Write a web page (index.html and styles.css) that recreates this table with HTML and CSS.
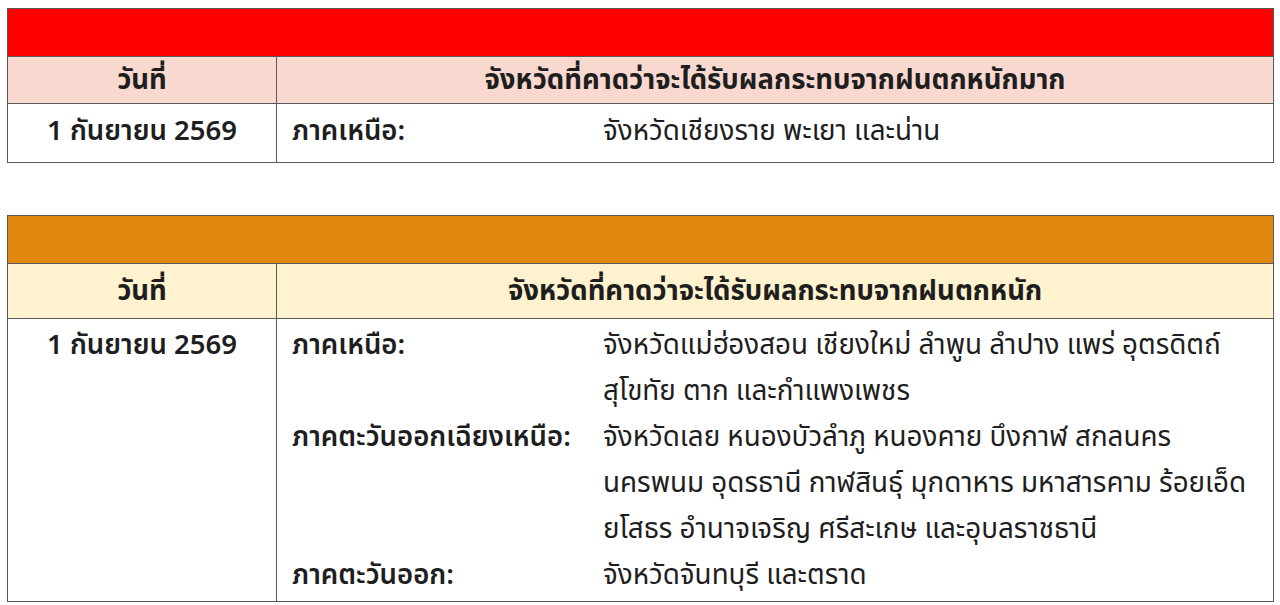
FILE: index.html
```html
<!DOCTYPE html>
<html lang="th">
<head>
<meta charset="utf-8">
<link rel="stylesheet" href="styles.css">
</head>
<body>
<div class="page">
  <section class="tbl tbl-red">
    <div class="bar"></div>
    <div class="row head">
      <div class="c1">วันที่</div>
      <div class="c2">จังหวัดที่คาดว่าจะได้รับผลกระทบจากฝนตกหนักมาก</div>
    </div>
    <div class="row body one">
      <div class="c1">1 กันยายน 2569</div>
      <div class="c2 regions">
        <div class="lbl">ภาคเหนือ:</div>
        <div class="val">จังหวัดเชียงราย พะเยา และน่าน</div>
      </div>
    </div>
  </section>

  <section class="tbl tbl-orange">
    <div class="bar"></div>
    <div class="row head">
      <div class="c1">วันที่</div>
      <div class="c2">จังหวัดที่คาดว่าจะได้รับผลกระทบจากฝนตกหนัก</div>
    </div>
    <div class="row body two">
      <div class="c1">1 กันยายน 2569</div>
      <div class="c2 regions">
        <div class="lbl">ภาคเหนือ:</div>
        <div class="val">จังหวัดแม่ฮ่องสอน เชียงใหม่ ลำพูน ลำปาง แพร่ อุตรดิตถ์<br>สุโขทัย ตาก และกำแพงเพชร</div>
        <div class="lbl">ภาคตะวันออกเฉียงเหนือ:</div>
        <div class="val">จังหวัดเลย หนองบัวลำภู หนองคาย บึงกาฬ สกลนคร<br>นครพนม อุดรธานี กาฬสินธุ์ มุกดาหาร มหาสารคาม ร้อยเอ็ด<br>ยโสธร อำนาจเจริญ ศรีสะเกษ และอุบลราชธานี</div>
        <div class="lbl">ภาคตะวันออก:</div>
        <div class="val">จังหวัดจันทบุรี และตราด</div>
      </div>
    </div>
  </section>
</div>
</body>
</html>
```
FILE: styles.css
```css
html, body {
  margin: 0;
  padding: 0;
  background: #ffffff;
}
body {
  font-family: "Noto Sans Thai", "Noto Sans", "DejaVu Sans", sans-serif;
  color: #1e1e1e;
  font-size: 27.5px;
}
.page {
  padding: 8px 6px 0 7px;
  display: flex;
  flex-direction: column;
  gap: 52px;
}
.tbl {
  border: 1.5px solid #5a5a5a;
  display: flex;
  flex-direction: column;
}
.bar {
  height: 47px;
  border-bottom: 1.5px solid #5a5a5a;
}
.tbl-red .bar { background: #fe0000; }
.tbl-orange .bar { background: #e0880f; }
.row {
  display: grid;
  grid-template-columns: 269px 1fr;
}
.row .c1 {
  border-right: 1.5px solid #5a5a5a;
  text-align: center;
}
.head {
  border-bottom: 1.5px solid #5a5a5a;
  font-weight: 700;
}
.tbl-red .head { background: #f9d8d0; height: 46px; line-height: 48px; }
.tbl-orange .head { background: #fff2cf; height: 54px; line-height: 56px; }
.head .c2 { text-align: center; }
.body { line-height: 46px; }
.body .c1 { font-weight: 600; }
.lbl { font-weight: 600; white-space: nowrap; }
.val { white-space: nowrap; font-size: 27.8px; }
.body.one { height: 58px; }
.body.one .c1, .body.one .c2 { padding-top: 5px; }
.body.two .c1, .body.two .c2 { padding-top: 4px; padding-bottom: 2px; }
.regions {
  display: grid;
  grid-template-columns: 311px 1fr;
  padding-left: 15px;
}
```
